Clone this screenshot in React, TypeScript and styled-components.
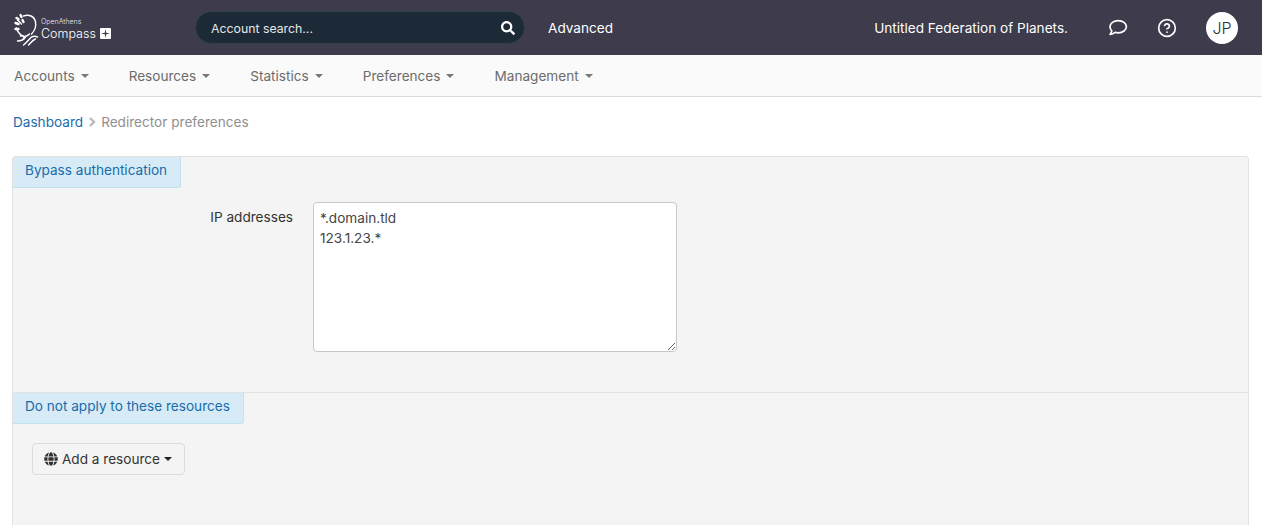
import React from 'react';
import styled, { createGlobalStyle } from 'styled-components';
import { FaGlobe, FaSearch } from 'react-icons/fa';
import { FiHelpCircle } from 'react-icons/fi';

const GlobalStyle = createGlobalStyle`
  html, body {
    margin: 0;
    padding: 0;
    height: 100%;
    overflow: hidden;
    background: #ffffff;
    font-family: Inter, "Liberation Sans", sans-serif;
    font-size: 13.6px;
    color: #333333;
  }
  * { box-sizing: border-box; }
`;

// --- Top bar ---

const TopBar = styled.header`
  height: 55px;
  background: #3d3b4c;
  color: #ffffff;
  display: flex;
  align-items: center;
  padding: 0 24px 0 13px;
`;

const Logo = styled.div`
  width: 182px;
  display: flex;
  align-items: center;
  gap: 1px;
`;

const LogoText = styled.div`
  display: flex;
  flex-direction: column;
  margin-top: 3px;
`;

const LogoSmall = styled.span`
  font-size: 7px;
  font-weight: 300;
  line-height: 8px;
  color: #e4e4e8;
`;

const LogoName = styled.span`
  font-size: 12.5px;
  font-weight: 300;
  line-height: 15px;
  display: flex;
  align-items: center;
  gap: 4px;
`;

const PlusBox = styled.span`
  width: 11px;
  height: 11px;
  background: #ffffff;
  border-radius: 1px;
  display: inline-flex;
  align-items: center;
  justify-content: center;
`;

const SearchBox = styled.div`
  width: 330px;
  height: 33px;
  background: #1c2936;
  border: 1px solid #333f4d;
  border-radius: 17px;
  display: flex;
  align-items: center;
  justify-content: space-between;
  padding: 1px 9px 0 15px;
  font-size: 12.3px;
  color: #e6e8ea;
`;

const AdvancedLink = styled.span`
  margin-left: 23px;
  font-size: 13.6px;
`;

const TopRight = styled.div`
  margin-left: auto;
  display: flex;
  align-items: center;
`;

const OrgName = styled.span`
  margin-right: 40px;
`;

const IconSlot = styled.span`
  display: inline-flex;
  margin-right: 29px;
`;

const Avatar = styled.span`
  width: 32px;
  height: 32px;
  border-radius: 50%;
  background: #ffffff;
  color: #333333;
  font-size: 16px;
  font-weight: 300;
  display: flex;
  align-items: center;
  justify-content: center;
`;

// --- Sub navigation ---

const SubNav = styled.nav`
  height: 42px;
  background: #fafafa;
  border-bottom: 1px solid #dcdcdc;
  display: flex;
  align-items: center;
  padding: 0 14px;
  gap: 40px;
`;

const NavItem = styled.span`
  color: #6c6c6c;
  font-size: 13.6px;
  display: inline-flex;
  align-items: center;
  gap: 6px;
`;

const Caret = styled.span<{ $color?: string }>`
  width: 0;
  height: 0;
  border-left: 4px solid transparent;
  border-right: 4px solid transparent;
  border-top: 4px solid ${({ $color }) => $color || '#777777'};
  display: inline-block;
`;

// --- Breadcrumb ---

const Breadcrumb = styled.div`
  height: 59px;
  display: flex;
  align-items: center;
  padding: 0 13px 10px;
  gap: 5px;
`;

const CrumbLink = styled.span`
  color: #1a6bac;
`;

const CrumbCurrent = styled.span`
  color: #8f8f8f;
`;

// --- Panel ---

const Panel = styled.section`
  margin: 0 13px 0 12px;
  height: 369px;
  background: #f4f4f4;
  border: 1px solid #e2e2e2;
  border-bottom: none;
  border-radius: 4px 4px 0 0;
  display: flex;
  flex-direction: column;
`;

const Legend = styled.div`
  width: fit-content;
  height: 31px;
  background: #d6ebf5;
  border: solid #c4e3f1;
  border-width: 0 1px 1px 0;
  border-radius: 0 0 3px 0;
  color: #1a6bac;
  padding: 0 13px 4px 12px;
  display: flex;
  align-items: center;
`;

const FirstSection = styled.div`
  height: 236px;
  flex-shrink: 0;
  border-bottom: 1px solid #e2e2e2;
`;

const FormRow = styled.div`
  display: flex;
  align-items: flex-start;
  padding-top: 14px;
`;

const FieldLabel = styled.label`
  width: 280px;
  text-align: right;
  padding-top: 7px;
  line-height: 17px;
  color: #333333;
`;

const AddressArea = styled.textarea`
  margin-left: 20px;
  width: 364px;
  height: 150px;
  background: #ffffff;
  border: 1px solid #c8c8c8;
  border-radius: 4px;
  padding: 5px 6px;
  font-family: inherit;
  font-size: 13.6px;
  line-height: 20px;
  color: #444444;
  outline: none;
`;

const SecondSection = styled.div`
  display: flex;
  flex-direction: column;
`;

const AddButton = styled.button`
  margin: 19px 0 0 19px;
  align-self: flex-start;
  width: 153px;
  height: 32px;
  background: #f4f4f4;
  border: 1px solid #dcdcdc;
  border-radius: 4px;
  font-family: inherit;
  font-size: 13.6px;
  color: #333333;
  display: inline-flex;
  align-items: center;
  justify-content: center;
  gap: 4px;
  padding: 0 1px 0 0;
`;

// --- Drawings ---

const WreathLogo = () => (
  <svg width="27" height="36" viewBox="0 0 26 36" fill="none" stroke="#ffffff" strokeWidth="1.4" strokeLinecap="round">
    <path d="M10 6c5-2 11 0 12 6 1 5-1 9-4 12" />
    <path d="M3 18c1 4 3 6 6 8 3 1 5 0 7-2" />
    <path d="M7 26c3-1 4 1 3 3" />
    <path d="M4 31c4 0 6-1 8-4" />
    <path d="M10 35c3-2 5-5 8-8 2-1 4-1 6 0" />
    <path d="M15 35c2-2 4-5 7-6" />
    <path d="M4 10c2 1 3 3 4 4" />
    <path d="M7 5l1 2" strokeWidth="2.4" />
    <path d="M3 8l2 1" strokeWidth="2.4" />
    <path d="M2 13l3 1" strokeWidth="2.4" />
    <path d="M2 19l3 0" strokeWidth="2.4" />
    <path d="M9 10l1 2" strokeWidth="2.4" />
  </svg>
);

const ChatBubble = () => (
  <svg width="20" height="18" viewBox="0 0 20 18" fill="none" stroke="#ffffff" strokeWidth="1.7" strokeLinejoin="round">
    <path d="M10.2 1.6c4.5 0 8.2 2.700 8.200 6.100s-3.700 6.100-8.200 6.100c-1.100 0-2.200-.2-3.100-.5-1.300 1-2.900 1.800-5 2 .9-1 1.500-2.300 1.700-3.400C2.600 10.800 2 9.300 2 7.700c0-3.400 3.700-6.100 8.200-6.100z" />
  </svg>
);

const ChevronCrumb = () => (
  <svg width="8" height="10" viewBox="0 0 8 10" fill="none" stroke="#bbbbbb" strokeWidth="2.4">
    <path d="M2 1l4 4-4 4" />
  </svg>
);

const PlusMark = () => (
  <svg width="9" height="9" viewBox="0 0 9 9" fill="#3d3b4c">
    <path d="M4.500 0l.7 3.800 3.800.7-3.800.7-.7 3.800-.7-3.800L0 4.500l3.800-.7z" />
  </svg>
);

const navItems = ['Accounts', 'Resources', 'Statistics', 'Preferences', 'Management'];

const App: React.FC = () => (
  <>
    <GlobalStyle />
    <TopBar>
      <Logo>
        <WreathLogo />
        <LogoText>
          <LogoSmall>OpenAthens</LogoSmall>
          <LogoName>
            Compass
            <PlusBox><PlusMark /></PlusBox>
          </LogoName>
        </LogoText>
      </Logo>
      <SearchBox>
        <span>Account search...</span>
        <FaSearch size={14} color="#ffffff" />
      </SearchBox>
      <AdvancedLink>Advanced</AdvancedLink>
      <TopRight>
        <OrgName>Untitled Federation of Planets.</OrgName>
        <IconSlot><ChatBubble /></IconSlot>
        <IconSlot><FiHelpCircle size={20} color="#ffffff" /></IconSlot>
        <Avatar>JP</Avatar>
      </TopRight>
    </TopBar>

    <SubNav>
      {navItems.map((item) => (
        <NavItem key={item}>
          {item}
          <Caret />
        </NavItem>
      ))}
    </SubNav>

    <Breadcrumb>
      <CrumbLink>Dashboard</CrumbLink>
      <ChevronCrumb />
      <CrumbCurrent>Redirector preferences</CrumbCurrent>
    </Breadcrumb>

    <Panel>
      <FirstSection>
        <Legend>Bypass authentication</Legend>
        <FormRow>
          <FieldLabel>IP addresses</FieldLabel>
          <AddressArea defaultValue={'*.domain.tld\n123.1.23.*'} />
        </FormRow>
      </FirstSection>
      <SecondSection>
        <Legend>Do not apply to these resources</Legend>
        <AddButton>
          <FaGlobe size={14} color="#333333" />
          <span>Add a resource</span>
          <Caret $color="#222222" />
        </AddButton>
      </SecondSection>
    </Panel>
  </>
);

export default App;
